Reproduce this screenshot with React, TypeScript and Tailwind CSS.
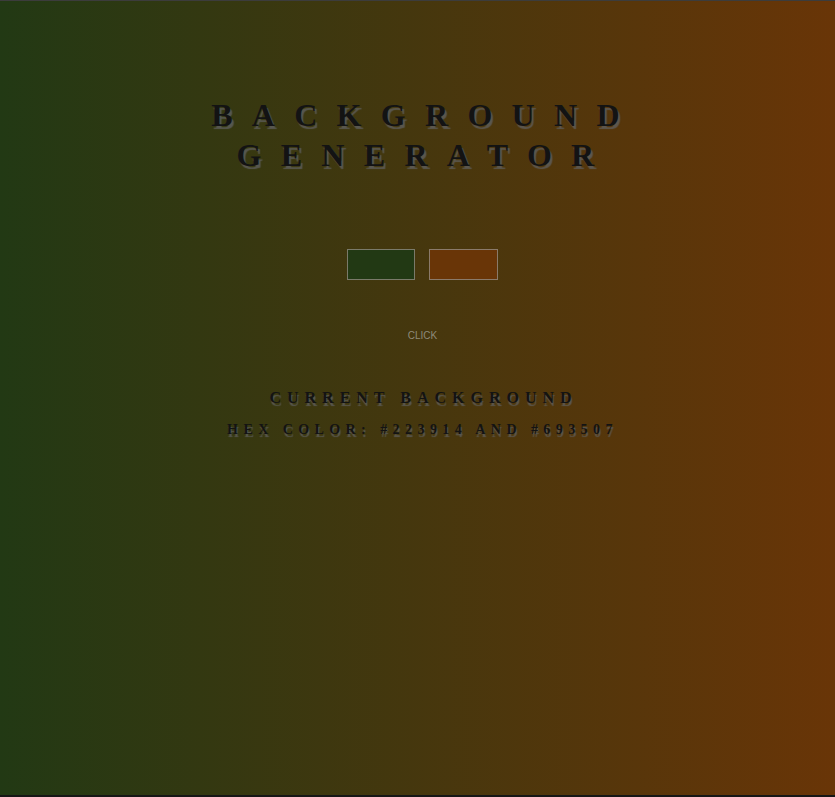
import React, { useState } from 'react';

export default function App() {
  const [left, setLeft] = useState('#223914');
  const [right, setRight] = useState('#693507');

  const randomize = () => {
    const hex = () =>
      '#' + Math.floor(Math.random() * 0xffffff).toString(16).padStart(6, '0');
    setLeft(hex());
    setRight(hex());
  };

  return (
    <div
      className="h-[797px] w-full border-t border-t-[#3c3c3c] border-b-2 border-b-[#161616] pl-[10px] text-center uppercase font-['Liberation_Serif','Times_New_Roman',serif]"
      style={{ background: `linear-gradient(to right, ${left}, ${right})` }}
    >
      <h1 className="mx-auto mt-[94px] w-[480px] pl-[5px] text-[32px] leading-[40px] font-bold tracking-[19.3px] text-[#131313] [text-shadow:2px_3px_1px_rgba(95,95,95,0.8)]">
        Background Generator
      </h1>

      <div className="mt-[74px] flex justify-center gap-[14px]">
        <div
          className="h-[31px] w-[68px] border border-[#7a7a6a]"
          style={{ backgroundColor: left }}
        />
        <div
          className="h-[31px] w-[69px] border border-[#8a7a6a]"
          style={{ backgroundColor: right }}
        />
      </div>

      <button
        type="button"
        onClick={randomize}
        className="mt-[48px] text-[10px] text-[#8e8a7a] uppercase font-['Liberation_Sans',Arial,sans-serif]"
      >
        Click
      </button>

      <h2 className="mt-[42px] pl-[2px] text-[16px] leading-[20px] font-bold tracking-[6px] text-[#131313] [text-shadow:1px_3px_1px_rgba(95,95,95,0.8)]">
        Current Background
      </h2>
      <h3 className="mt-[13px] text-[14px] leading-[18px] font-bold tracking-[5.43px] text-[#131313] [text-shadow:1px_3px_1px_rgba(95,95,95,0.8)]">
        Hex color: {left} and {right}
      </h3>
    </div>
  );
}
